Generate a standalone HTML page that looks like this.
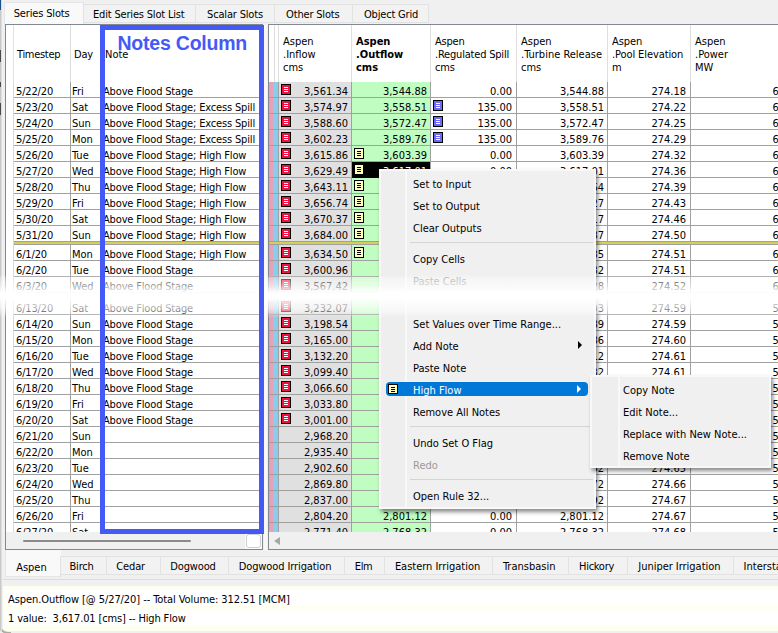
<!DOCTYPE html>
<html lang="en"><head><meta charset="utf-8"><title>Series Slots - Notes Column</title>
<style>
html,body{margin:0;padding:0}
body{width:778px;height:633px;overflow:hidden;background:#f0f0f0;position:relative;font-family:"DejaVu Sans Condensed","Liberation Sans",sans-serif;font-size:11px;color:#000;line-height:13px}
div,span{box-sizing:border-box}
.a{position:absolute}
.t{position:absolute;white-space:pre;height:13px;line-height:13px}
.r{text-align:right}
.hl{position:absolute;height:1px;background:#a0a0a0}
.vl{position:absolute;width:1px;background:#a0a0a0}
.ic{position:absolute;width:10px;height:11px;border:1px solid #000}
.ic.red{background:linear-gradient(#fff,#fff) 2px 2px/4px 1px no-repeat,linear-gradient(#fff,#fff) 2px 4px/4px 1px no-repeat,linear-gradient(#fff,#fff) 2px 6px/4px 1px no-repeat,#ee1440}
.ic.note{background:linear-gradient(#000,#000) 2px 2px/4px 1px no-repeat,linear-gradient(#000,#000) 2px 4px/4px 1px no-repeat,linear-gradient(#000,#000) 2px 6px/4px 1px no-repeat,#ffffc0}
.ic.blu{background:linear-gradient(#fff,#fff) 2px 2px/4px 1px no-repeat,linear-gradient(#fff,#fff) 2px 4px/4px 1px no-repeat,linear-gradient(#fff,#fff) 2px 6px/4px 1px no-repeat,#6b6bf3}
.tab{position:absolute;border:1px solid #e2e2e2;background:#f2f2f2;text-align:center;white-space:pre}
.tab.sel{background:#f9f9f9;border-color:#e6e6e6}
.menu{position:absolute;background:#f0f0f0;border:2px solid #f8f8f8;box-shadow:2px 3px 4px rgba(0,0,0,.45)}
.menu .gut{position:absolute;left:0;top:0;bottom:0;width:26px;background:#eeeeee;border-right:2px solid #f8f8f8}
.mi{position:absolute;white-space:pre;height:13px;line-height:13px}
.mi.dis{color:#9a9a9a}
.sep{position:absolute;height:1px;background:#d4d4d4}
.nt{letter-spacing:-0.16px}
</style></head><body>

<div class="tab sel" style="left:4px;top:2px;width:80px;height:23px;line-height:21px;border-bottom:none;letter-spacing:-0.15px;text-align:left;padding-left:8.7px">Series Slots</div>
<div class="tab" style="left:83px;top:4px;width:113px;height:19px;line-height:19px;letter-spacing:-0.18px;text-align:left;padding-left:9.0px">Edit Series Slot List</div>
<div class="tab" style="left:195px;top:4px;width:80px;height:19px;line-height:19px;letter-spacing:-0.18px;text-align:left;padding-left:11.1px">Scalar Slots</div>
<div class="tab" style="left:274px;top:4px;width:79px;height:19px;line-height:19px;letter-spacing:-0.18px;text-align:left;padding-left:11.1px">Other Slots</div>
<div class="tab" style="left:352px;top:4px;width:77px;height:19px;line-height:19px;letter-spacing:-0.18px;text-align:left;padding-left:11.0px">Object Grid</div>
<div class="a" style="left:5px;top:24px;width:258px;height:526px;background:#fff;border:1px solid #828790"></div>
<div class="vl" style="left:13px;top:25px;height:57px;background:#e2e2e2"></div>
<div class="vl" style="left:70px;top:25px;height:57px;background:#dcdcdc"></div>
<div class="t" style="left:17px;top:48px;letter-spacing:-0.3px">Timestep</div>
<div class="t" style="left:74px;top:48px;letter-spacing:-0.2px">Day</div>
<div class="t" style="left:105px;top:48px">Note</div>
<div class="a" style="left:6px;top:82px;width:256px;height:450px;overflow:hidden">
<div class="vl" style="left:7px;top:0;height:450px;background:#d8d8d8"></div>
<div class="vl" style="left:64px;top:0;height:450px"></div>
<div class="hl" style="left:8px;top:15px;width:250px"></div>
<div class="t" style="left:10px;top:3px;letter-spacing:-0.15px">5/22/20</div>
<div class="t" style="left:66px;top:3px">Fri</div>
<div class="t nt" style="left:97px;top:3px">Above Flood Stage</div>
<div class="hl" style="left:8px;top:31px;width:250px"></div>
<div class="t" style="left:10px;top:19px;letter-spacing:-0.15px">5/23/20</div>
<div class="t" style="left:66px;top:19px">Sat</div>
<div class="t nt" style="left:97px;top:19px">Above Flood Stage; Excess Spill</div>
<div class="hl" style="left:8px;top:47px;width:250px"></div>
<div class="t" style="left:10px;top:35px;letter-spacing:-0.15px">5/24/20</div>
<div class="t" style="left:66px;top:35px">Sun</div>
<div class="t nt" style="left:97px;top:35px">Above Flood Stage; Excess Spill</div>
<div class="hl" style="left:8px;top:63px;width:250px"></div>
<div class="t" style="left:10px;top:51px;letter-spacing:-0.15px">5/25/20</div>
<div class="t" style="left:66px;top:51px">Mon</div>
<div class="t nt" style="left:97px;top:51px">Above Flood Stage; Excess Spill</div>
<div class="hl" style="left:8px;top:79px;width:250px"></div>
<div class="t" style="left:10px;top:67px;letter-spacing:-0.15px">5/26/20</div>
<div class="t" style="left:66px;top:67px">Tue</div>
<div class="t nt" style="left:97px;top:67px">Above Flood Stage; High Flow</div>
<div class="hl" style="left:8px;top:95px;width:250px"></div>
<div class="t" style="left:10px;top:83px;letter-spacing:-0.15px">5/27/20</div>
<div class="t" style="left:66px;top:83px">Wed</div>
<div class="t nt" style="left:97px;top:83px">Above Flood Stage; High Flow</div>
<div class="hl" style="left:8px;top:111px;width:250px"></div>
<div class="t" style="left:10px;top:99px;letter-spacing:-0.15px">5/28/20</div>
<div class="t" style="left:66px;top:99px">Thu</div>
<div class="t nt" style="left:97px;top:99px">Above Flood Stage; High Flow</div>
<div class="hl" style="left:8px;top:127px;width:250px"></div>
<div class="t" style="left:10px;top:115px;letter-spacing:-0.15px">5/29/20</div>
<div class="t" style="left:66px;top:115px">Fri</div>
<div class="t nt" style="left:97px;top:115px">Above Flood Stage; High Flow</div>
<div class="hl" style="left:8px;top:143px;width:250px"></div>
<div class="t" style="left:10px;top:131px;letter-spacing:-0.15px">5/30/20</div>
<div class="t" style="left:66px;top:131px">Sat</div>
<div class="t nt" style="left:97px;top:131px">Above Flood Stage; High Flow</div>
<div class="hl" style="left:8px;top:159px;width:250px"></div>
<div class="t" style="left:10px;top:147px;letter-spacing:-0.15px">5/31/20</div>
<div class="t" style="left:66px;top:147px">Sun</div>
<div class="t nt" style="left:97px;top:147px">Above Flood Stage; High Flow</div>
<div class="hl" style="left:8px;top:178px;width:250px"></div>
<div class="t" style="left:10px;top:166px;letter-spacing:-0.15px">6/1/20</div>
<div class="t" style="left:66px;top:166px">Mon</div>
<div class="t nt" style="left:97px;top:166px">Above Flood Stage; High Flow</div>
<div class="hl" style="left:8px;top:194px;width:250px"></div>
<div class="t" style="left:10px;top:182px;letter-spacing:-0.15px">6/2/20</div>
<div class="t" style="left:66px;top:182px">Tue</div>
<div class="t nt" style="left:97px;top:182px">Above Flood Stage</div>
<div class="hl" style="left:8px;top:210px;width:250px"></div>
<div class="t" style="left:10px;top:198px;letter-spacing:-0.15px">6/3/20</div>
<div class="t" style="left:66px;top:198px">Wed</div>
<div class="t nt" style="left:97px;top:198px">Above Flood Stage</div>
<div class="hl" style="left:8px;top:232px;width:250px"></div>
<div class="t" style="left:10px;top:220px;letter-spacing:-0.15px">6/13/20</div>
<div class="t" style="left:66px;top:220px">Sat</div>
<div class="t nt" style="left:97px;top:220px">Above Flood Stage</div>
<div class="hl" style="left:8px;top:248px;width:250px"></div>
<div class="t" style="left:10px;top:236px;letter-spacing:-0.15px">6/14/20</div>
<div class="t" style="left:66px;top:236px">Sun</div>
<div class="t nt" style="left:97px;top:236px">Above Flood Stage</div>
<div class="hl" style="left:8px;top:264px;width:250px"></div>
<div class="t" style="left:10px;top:252px;letter-spacing:-0.15px">6/15/20</div>
<div class="t" style="left:66px;top:252px">Mon</div>
<div class="t nt" style="left:97px;top:252px">Above Flood Stage</div>
<div class="hl" style="left:8px;top:280px;width:250px"></div>
<div class="t" style="left:10px;top:268px;letter-spacing:-0.15px">6/16/20</div>
<div class="t" style="left:66px;top:268px">Tue</div>
<div class="t nt" style="left:97px;top:268px">Above Flood Stage</div>
<div class="hl" style="left:8px;top:296px;width:250px"></div>
<div class="t" style="left:10px;top:284px;letter-spacing:-0.15px">6/17/20</div>
<div class="t" style="left:66px;top:284px">Wed</div>
<div class="t nt" style="left:97px;top:284px">Above Flood Stage</div>
<div class="hl" style="left:8px;top:312px;width:250px"></div>
<div class="t" style="left:10px;top:300px;letter-spacing:-0.15px">6/18/20</div>
<div class="t" style="left:66px;top:300px">Thu</div>
<div class="t nt" style="left:97px;top:300px">Above Flood Stage</div>
<div class="hl" style="left:8px;top:328px;width:250px"></div>
<div class="t" style="left:10px;top:316px;letter-spacing:-0.15px">6/19/20</div>
<div class="t" style="left:66px;top:316px">Fri</div>
<div class="t nt" style="left:97px;top:316px">Above Flood Stage</div>
<div class="hl" style="left:8px;top:344px;width:250px"></div>
<div class="t" style="left:10px;top:332px;letter-spacing:-0.15px">6/20/20</div>
<div class="t" style="left:66px;top:332px">Sat</div>
<div class="t nt" style="left:97px;top:332px">Above Flood Stage</div>
<div class="hl" style="left:8px;top:360px;width:250px"></div>
<div class="t" style="left:10px;top:348px;letter-spacing:-0.15px">6/21/20</div>
<div class="t" style="left:66px;top:348px">Sun</div>
<div class="hl" style="left:8px;top:376px;width:250px"></div>
<div class="t" style="left:10px;top:364px;letter-spacing:-0.15px">6/22/20</div>
<div class="t" style="left:66px;top:364px">Mon</div>
<div class="hl" style="left:8px;top:392px;width:250px"></div>
<div class="t" style="left:10px;top:380px;letter-spacing:-0.15px">6/23/20</div>
<div class="t" style="left:66px;top:380px">Tue</div>
<div class="hl" style="left:8px;top:408px;width:250px"></div>
<div class="t" style="left:10px;top:396px;letter-spacing:-0.15px">6/24/20</div>
<div class="t" style="left:66px;top:396px">Wed</div>
<div class="hl" style="left:8px;top:424px;width:250px"></div>
<div class="t" style="left:10px;top:412px;letter-spacing:-0.15px">6/25/20</div>
<div class="t" style="left:66px;top:412px">Thu</div>
<div class="hl" style="left:8px;top:440px;width:250px"></div>
<div class="t" style="left:10px;top:428px;letter-spacing:-0.15px">6/26/20</div>
<div class="t" style="left:66px;top:428px">Fri</div>
<div class="hl" style="left:8px;top:456px;width:250px"></div>
<div class="t" style="left:10px;top:444px;letter-spacing:-0.15px">6/27/20</div>
<div class="t" style="left:66px;top:444px">Sat</div>
<div class="hl" style="left:8px;top:160px;width:250px;height:2px;background:#d3cf57"></div>
<div class="hl" style="left:8px;top:162px;width:250px"></div>
</div>
<div class="a" style="left:6px;top:532px;width:256px;height:17px;background:#f0f0f0"></div>
<div class="a" style="left:23px;top:540px;width:168px;height:2px;background:#8b8b8b;border-radius:1px"></div>
<div class="a" style="left:245px;top:534px;width:17px;height:15px;background:#fbfbfb"></div>
<div class="a" style="left:246px;top:534px;width:15px;height:14px;background:#fff;border:1px solid #d0d0d0;border-radius:3px"></div>
<div class="a" style="left:264px;top:25px;width:3px;height:525px;background:#f8f8f6"></div>
<div class="a" style="left:268px;top:24px;width:520px;height:526px;background:#fff;border:1px solid #828790"></div>
<div class="vl" style="left:274px;top:25px;height:57px;background:#dedede"></div>
<div class="vl" style="left:278px;top:25px;height:57px;background:#dedede"></div>
<div class="vl" style="left:351px;top:25px;height:57px;background:#dedede"></div>
<div class="vl" style="left:430px;top:25px;height:57px;background:#dedede"></div>
<div class="vl" style="left:516px;top:25px;height:57px;background:#dedede"></div>
<div class="vl" style="left:607px;top:25px;height:57px;background:#dedede"></div>
<div class="vl" style="left:690px;top:25px;height:57px;background:#dedede"></div>
<div class="t" style="left:283px;top:35px;height:39px;">Aspen
.Inflow
cms</div>
<div class="t" style="left:356px;top:35px;height:39px;font-weight:bold;">Aspen
.Outflow
cms</div>
<div class="t" style="left:435px;top:35px;height:39px;letter-spacing:-0.2px;">Aspen
.Regulated Spill
cms</div>
<div class="t" style="left:521px;top:35px;height:39px;">Aspen
.Turbine Release
cms</div>
<div class="t" style="left:612px;top:35px;height:39px;letter-spacing:-0.1px;">Aspen
.Pool Elevation
m</div>
<div class="t" style="left:695px;top:35px;height:39px;">Aspen
.Power
MW</div>
<div class="a" style="left:269px;top:82px;width:509px;height:450px;overflow:hidden">
<div class="a" style="left:0;top:0;width:5px;height:450px;background:#e8a0b6"></div>
<div class="a" style="left:5px;top:0;width:4px;height:450px;background:#87cdee"></div>
<div class="a" style="left:10px;top:0;width:72px;height:450px;background:#e0e0e0"></div>
<div class="a" style="left:83px;top:0;width:78px;height:450px;background:#c0fdc0"></div>
<div class="vl" style="left:4px;top:0;height:450px;background:#c9b6c4"></div>
<div class="vl" style="left:9px;top:0;height:450px"></div>
<div class="vl" style="left:82px;top:0;height:450px"></div>
<div class="vl" style="left:161px;top:0;height:450px"></div>
<div class="vl" style="left:247px;top:0;height:450px"></div>
<div class="vl" style="left:338px;top:0;height:450px"></div>
<div class="vl" style="left:421px;top:0;height:450px"></div>
<div class="hl" style="left:0;top:15px;width:509px"></div>
<div class="ic red" style="left:12px;top:2px"></div>
<div class="t r" style="left:21px;width:58px;top:3px">3,561.34</div>
<div class="t r" style="left:97px;width:61px;top:3px;">3,544.88</div>
<div class="t r" style="left:181px;width:62px;top:3px">0.00</div>
<div class="t r" style="left:261px;width:74px;top:3px">3,544.88</div>
<div class="t r" style="left:351px;width:66px;top:3px">274.18</div>
<div class="t" style="left:503.5px;top:3px">600.00</div>
<div class="hl" style="left:0;top:31px;width:509px"></div>
<div class="ic red" style="left:12px;top:18px"></div>
<div class="t r" style="left:21px;width:58px;top:19px">3,574.97</div>
<div class="t r" style="left:97px;width:61px;top:19px;">3,558.51</div>
<div class="ic blu" style="left:164px;top:18px"></div>
<div class="t r" style="left:181px;width:62px;top:19px">135.00</div>
<div class="t r" style="left:261px;width:74px;top:19px">3,558.51</div>
<div class="t r" style="left:351px;width:66px;top:19px">274.22</div>
<div class="t" style="left:503.5px;top:19px">600.00</div>
<div class="hl" style="left:0;top:47px;width:509px"></div>
<div class="ic red" style="left:12px;top:34px"></div>
<div class="t r" style="left:21px;width:58px;top:35px">3,588.60</div>
<div class="t r" style="left:97px;width:61px;top:35px;">3,572.47</div>
<div class="ic blu" style="left:164px;top:34px"></div>
<div class="t r" style="left:181px;width:62px;top:35px">135.00</div>
<div class="t r" style="left:261px;width:74px;top:35px">3,572.47</div>
<div class="t r" style="left:351px;width:66px;top:35px">274.25</div>
<div class="t" style="left:503.5px;top:35px">600.00</div>
<div class="hl" style="left:0;top:63px;width:509px"></div>
<div class="ic red" style="left:12px;top:50px"></div>
<div class="t r" style="left:21px;width:58px;top:51px">3,602.23</div>
<div class="t r" style="left:97px;width:61px;top:51px;">3,589.76</div>
<div class="ic blu" style="left:164px;top:50px"></div>
<div class="t r" style="left:181px;width:62px;top:51px">135.00</div>
<div class="t r" style="left:261px;width:74px;top:51px">3,589.76</div>
<div class="t r" style="left:351px;width:66px;top:51px">274.29</div>
<div class="t" style="left:503.5px;top:51px">600.00</div>
<div class="hl" style="left:0;top:79px;width:509px"></div>
<div class="ic red" style="left:12px;top:66px"></div>
<div class="t r" style="left:21px;width:58px;top:67px">3,615.86</div>
<div class="ic note" style="left:85px;top:66px"></div>
<div class="t r" style="left:97px;width:61px;top:67px;">3,603.39</div>
<div class="t r" style="left:181px;width:62px;top:67px">0.00</div>
<div class="t r" style="left:261px;width:74px;top:67px">3,603.39</div>
<div class="t r" style="left:351px;width:66px;top:67px">274.32</div>
<div class="t" style="left:503.5px;top:67px">600.00</div>
<div class="hl" style="left:0;top:95px;width:509px"></div>
<div class="a" style="left:83px;top:80px;width:78px;height:16px;background:#000"></div>
<div class="ic red" style="left:12px;top:82px"></div>
<div class="t r" style="left:21px;width:58px;top:83px">3,629.49</div>
<div class="ic note" style="left:85px;top:82px"></div>
<div class="t r" style="left:97px;width:61px;top:83px;color:#fff;">3,617.01</div>
<div class="t r" style="left:181px;width:62px;top:83px">0.00</div>
<div class="t r" style="left:261px;width:74px;top:83px">3,617.01</div>
<div class="t r" style="left:351px;width:66px;top:83px">274.36</div>
<div class="t" style="left:503.5px;top:83px">600.00</div>
<div class="hl" style="left:0;top:111px;width:509px"></div>
<div class="ic red" style="left:12px;top:98px"></div>
<div class="t r" style="left:21px;width:58px;top:99px">3,643.11</div>
<div class="ic note" style="left:85px;top:98px"></div>
<div class="t r" style="left:97px;width:61px;top:99px;">3,630.64</div>
<div class="t r" style="left:181px;width:62px;top:99px">0.00</div>
<div class="t r" style="left:261px;width:74px;top:99px">3,630.64</div>
<div class="t r" style="left:351px;width:66px;top:99px">274.39</div>
<div class="t" style="left:503.5px;top:99px">600.00</div>
<div class="hl" style="left:0;top:127px;width:509px"></div>
<div class="ic red" style="left:12px;top:114px"></div>
<div class="t r" style="left:21px;width:58px;top:115px">3,656.74</div>
<div class="ic note" style="left:85px;top:114px"></div>
<div class="t r" style="left:97px;width:61px;top:115px;">3,644.27</div>
<div class="t r" style="left:181px;width:62px;top:115px">0.00</div>
<div class="t r" style="left:261px;width:74px;top:115px">3,644.27</div>
<div class="t r" style="left:351px;width:66px;top:115px">274.43</div>
<div class="t" style="left:503.5px;top:115px">600.00</div>
<div class="hl" style="left:0;top:143px;width:509px"></div>
<div class="ic red" style="left:12px;top:130px"></div>
<div class="t r" style="left:21px;width:58px;top:131px">3,670.37</div>
<div class="ic note" style="left:85px;top:130px"></div>
<div class="t r" style="left:97px;width:61px;top:131px;">3,658.17</div>
<div class="t r" style="left:181px;width:62px;top:131px">0.00</div>
<div class="t r" style="left:261px;width:74px;top:131px">3,658.17</div>
<div class="t r" style="left:351px;width:66px;top:131px">274.46</div>
<div class="t" style="left:503.5px;top:131px">600.00</div>
<div class="hl" style="left:0;top:159px;width:509px"></div>
<div class="ic red" style="left:12px;top:146px"></div>
<div class="t r" style="left:21px;width:58px;top:147px">3,684.00</div>
<div class="ic note" style="left:85px;top:146px"></div>
<div class="t r" style="left:97px;width:61px;top:147px;">3,671.87</div>
<div class="t r" style="left:181px;width:62px;top:147px">0.00</div>
<div class="t r" style="left:261px;width:74px;top:147px">3,671.87</div>
<div class="t r" style="left:351px;width:66px;top:147px">274.50</div>
<div class="t" style="left:503.5px;top:147px">600.00</div>
<div class="hl" style="left:0;top:178px;width:509px"></div>
<div class="ic red" style="left:12px;top:165px"></div>
<div class="t r" style="left:21px;width:58px;top:166px">3,634.50</div>
<div class="ic note" style="left:85px;top:165px"></div>
<div class="t r" style="left:97px;width:61px;top:166px;">3,650.35</div>
<div class="t r" style="left:181px;width:62px;top:166px">0.00</div>
<div class="t r" style="left:261px;width:74px;top:166px">3,650.35</div>
<div class="t r" style="left:351px;width:66px;top:166px">274.51</div>
<div class="t" style="left:503.5px;top:166px">600.00</div>
<div class="hl" style="left:0;top:194px;width:509px"></div>
<div class="ic red" style="left:12px;top:181px"></div>
<div class="t r" style="left:21px;width:58px;top:182px">3,600.96</div>
<div class="t r" style="left:97px;width:61px;top:182px;">3,617.32</div>
<div class="t r" style="left:181px;width:62px;top:182px">0.00</div>
<div class="t r" style="left:261px;width:74px;top:182px">3,617.32</div>
<div class="t r" style="left:351px;width:66px;top:182px">274.51</div>
<div class="t" style="left:503.5px;top:182px">600.00</div>
<div class="hl" style="left:0;top:210px;width:509px"></div>
<div class="ic red" style="left:12px;top:197px"></div>
<div class="t r" style="left:21px;width:58px;top:198px">3,567.42</div>
<div class="t r" style="left:97px;width:61px;top:198px;">3,584.28</div>
<div class="t r" style="left:181px;width:62px;top:198px">0.00</div>
<div class="t r" style="left:261px;width:74px;top:198px">3,584.28</div>
<div class="t r" style="left:351px;width:66px;top:198px">274.52</div>
<div class="t" style="left:503.5px;top:198px">600.00</div>
<div class="hl" style="left:0;top:232px;width:509px"></div>
<div class="ic red" style="left:12px;top:219px"></div>
<div class="t r" style="left:21px;width:58px;top:220px">3,232.07</div>
<div class="t r" style="left:97px;width:61px;top:220px;">3,248.93</div>
<div class="t r" style="left:181px;width:62px;top:220px">0.00</div>
<div class="t r" style="left:261px;width:74px;top:220px">3,248.93</div>
<div class="t r" style="left:351px;width:66px;top:220px">274.59</div>
<div class="t" style="left:503.5px;top:220px">500.00</div>
<div class="hl" style="left:0;top:248px;width:509px"></div>
<div class="ic red" style="left:12px;top:235px"></div>
<div class="t r" style="left:21px;width:58px;top:236px">3,198.54</div>
<div class="t r" style="left:97px;width:61px;top:236px;">3,215.89</div>
<div class="t r" style="left:181px;width:62px;top:236px">0.00</div>
<div class="t r" style="left:261px;width:74px;top:236px">3,215.89</div>
<div class="t r" style="left:351px;width:66px;top:236px">274.59</div>
<div class="t" style="left:503.5px;top:236px">500.00</div>
<div class="hl" style="left:0;top:264px;width:509px"></div>
<div class="ic red" style="left:12px;top:251px"></div>
<div class="t r" style="left:21px;width:58px;top:252px">3,165.00</div>
<div class="t r" style="left:97px;width:61px;top:252px;">3,182.86</div>
<div class="t r" style="left:181px;width:62px;top:252px">0.00</div>
<div class="t r" style="left:261px;width:74px;top:252px">3,182.86</div>
<div class="t r" style="left:351px;width:66px;top:252px">274.60</div>
<div class="t" style="left:503.5px;top:252px">500.00</div>
<div class="hl" style="left:0;top:280px;width:509px"></div>
<div class="ic red" style="left:12px;top:267px"></div>
<div class="t r" style="left:21px;width:58px;top:268px">3,132.20</div>
<div class="t r" style="left:97px;width:61px;top:268px;">3,149.12</div>
<div class="t r" style="left:181px;width:62px;top:268px">0.00</div>
<div class="t r" style="left:261px;width:74px;top:268px">3,149.12</div>
<div class="t r" style="left:351px;width:66px;top:268px">274.61</div>
<div class="t" style="left:503.5px;top:268px">500.00</div>
<div class="hl" style="left:0;top:296px;width:509px"></div>
<div class="ic red" style="left:12px;top:283px"></div>
<div class="t r" style="left:21px;width:58px;top:284px">3,099.40</div>
<div class="t r" style="left:97px;width:61px;top:284px;">3,116.32</div>
<div class="t r" style="left:181px;width:62px;top:284px">0.00</div>
<div class="t r" style="left:261px;width:74px;top:284px">3,116.32</div>
<div class="t r" style="left:351px;width:66px;top:284px">274.61</div>
<div class="t" style="left:503.5px;top:284px">500.00</div>
<div class="hl" style="left:0;top:312px;width:509px"></div>
<div class="ic red" style="left:12px;top:299px"></div>
<div class="t r" style="left:21px;width:58px;top:300px">3,066.60</div>
<div class="t r" style="left:97px;width:61px;top:300px;">3,083.52</div>
<div class="t r" style="left:181px;width:62px;top:300px">0.00</div>
<div class="t r" style="left:261px;width:74px;top:300px">3,083.52</div>
<div class="t r" style="left:351px;width:66px;top:300px">274.62</div>
<div class="t" style="left:503.5px;top:300px">500.00</div>
<div class="hl" style="left:0;top:328px;width:509px"></div>
<div class="ic red" style="left:12px;top:315px"></div>
<div class="t r" style="left:21px;width:58px;top:316px">3,033.80</div>
<div class="t r" style="left:97px;width:61px;top:316px;">3,050.72</div>
<div class="t r" style="left:181px;width:62px;top:316px">0.00</div>
<div class="t r" style="left:261px;width:74px;top:316px">3,050.72</div>
<div class="t r" style="left:351px;width:66px;top:316px">274.62</div>
<div class="t" style="left:503.5px;top:316px">500.00</div>
<div class="hl" style="left:0;top:344px;width:509px"></div>
<div class="ic red" style="left:12px;top:331px"></div>
<div class="t r" style="left:21px;width:58px;top:332px">3,001.00</div>
<div class="t r" style="left:97px;width:61px;top:332px;">3,017.92</div>
<div class="t r" style="left:181px;width:62px;top:332px">0.00</div>
<div class="t r" style="left:261px;width:74px;top:332px">3,017.92</div>
<div class="t r" style="left:351px;width:66px;top:332px">274.63</div>
<div class="t" style="left:503.5px;top:332px">500.00</div>
<div class="hl" style="left:0;top:360px;width:509px"></div>
<div class="t r" style="left:21px;width:58px;top:348px">2,968.20</div>
<div class="t r" style="left:97px;width:61px;top:348px;">2,985.12</div>
<div class="t r" style="left:181px;width:62px;top:348px">0.00</div>
<div class="t r" style="left:261px;width:74px;top:348px">2,985.12</div>
<div class="t r" style="left:351px;width:66px;top:348px">274.63</div>
<div class="t" style="left:503.5px;top:348px">500.00</div>
<div class="hl" style="left:0;top:376px;width:509px"></div>
<div class="t r" style="left:21px;width:58px;top:364px">2,935.40</div>
<div class="t r" style="left:97px;width:61px;top:364px;">2,952.32</div>
<div class="t r" style="left:181px;width:62px;top:364px">0.00</div>
<div class="t r" style="left:261px;width:74px;top:364px">2,952.32</div>
<div class="t r" style="left:351px;width:66px;top:364px">274.64</div>
<div class="t" style="left:503.5px;top:364px">500.00</div>
<div class="hl" style="left:0;top:392px;width:509px"></div>
<div class="t r" style="left:21px;width:58px;top:380px">2,902.60</div>
<div class="t r" style="left:97px;width:61px;top:380px;">2,919.52</div>
<div class="t r" style="left:181px;width:62px;top:380px">0.00</div>
<div class="t r" style="left:261px;width:74px;top:380px">2,919.52</div>
<div class="t r" style="left:351px;width:66px;top:380px">274.65</div>
<div class="t" style="left:503.5px;top:380px">500.00</div>
<div class="hl" style="left:0;top:408px;width:509px"></div>
<div class="t r" style="left:21px;width:58px;top:396px">2,869.80</div>
<div class="t r" style="left:97px;width:61px;top:396px;">2,886.72</div>
<div class="t r" style="left:181px;width:62px;top:396px">0.00</div>
<div class="t r" style="left:261px;width:74px;top:396px">2,886.72</div>
<div class="t r" style="left:351px;width:66px;top:396px">274.66</div>
<div class="t" style="left:503.5px;top:396px">500.00</div>
<div class="hl" style="left:0;top:424px;width:509px"></div>
<div class="t r" style="left:21px;width:58px;top:412px">2,837.00</div>
<div class="t r" style="left:97px;width:61px;top:412px;">2,853.92</div>
<div class="t r" style="left:181px;width:62px;top:412px">0.00</div>
<div class="t r" style="left:261px;width:74px;top:412px">2,853.92</div>
<div class="t r" style="left:351px;width:66px;top:412px">274.67</div>
<div class="t" style="left:503.5px;top:412px">500.00</div>
<div class="hl" style="left:0;top:440px;width:509px"></div>
<div class="t r" style="left:21px;width:58px;top:428px">2,804.20</div>
<div class="t r" style="left:97px;width:61px;top:428px;">2,801.12</div>
<div class="t r" style="left:181px;width:62px;top:428px">0.00</div>
<div class="t r" style="left:261px;width:74px;top:428px">2,801.12</div>
<div class="t r" style="left:351px;width:66px;top:428px">274.67</div>
<div class="t" style="left:503.5px;top:428px">500.00</div>
<div class="hl" style="left:0;top:456px;width:509px"></div>
<div class="t r" style="left:21px;width:58px;top:444px">2,771.40</div>
<div class="t r" style="left:97px;width:61px;top:444px;">2,768.32</div>
<div class="t r" style="left:181px;width:62px;top:444px">0.00</div>
<div class="t r" style="left:261px;width:74px;top:444px">2,768.32</div>
<div class="t r" style="left:351px;width:66px;top:444px">274.68</div>
<div class="t" style="left:503.5px;top:444px">500.00</div>
<div class="hl" style="left:0;top:160px;width:509px;height:2px;background:#d3cf57"></div>
<div class="hl" style="left:0;top:162px;width:509px"></div>
</div>
<div class="a" style="left:269px;top:532px;width:509px;height:17px;background:#f0f0f0"></div>
<div class="a" style="left:274px;top:537px;width:0;height:0;border-top:4px solid transparent;border-bottom:4px solid transparent;border-right:6px solid #a6a6a6"></div>
<div class="a" style="left:3px;top:579px;width:780px;height:1px;background:#dcdcdc"></div>
<div class="tab sel" style="left:5px;top:550px;width:56px;height:27px;line-height:36px;border-top:none;border-right-color:#f9f9f9;text-align:left;padding-left:10.3px;letter-spacing:-0.05px">Aspen</div>
<div class="a" style="left:60px;top:556px;width:1px;height:21px;background:#dcdcdc"></div>
<div class="tab" style="left:60px;top:556px;width:47px;height:19px;line-height:19px;text-align:left;padding-left:8.5px;letter-spacing:-0.2px">Birch</div>
<div class="tab" style="left:106px;top:556px;width:55px;height:19px;line-height:19px;text-align:left;padding-left:9.3px;letter-spacing:-0.15px">Cedar</div>
<div class="tab" style="left:160px;top:556px;width:69px;height:19px;line-height:19px;text-align:left;padding-left:9.3px;letter-spacing:-0.15px">Dogwood</div>
<div class="tab" style="left:228px;top:556px;width:117px;height:19px;line-height:19px;text-align:left;padding-left:9.7px;letter-spacing:-0.1px">Dogwood Irrigation</div>
<div class="tab" style="left:344px;top:556px;width:41px;height:19px;line-height:19px;text-align:left;padding-left:9.8px;letter-spacing:-0.4px">Elm</div>
<div class="tab" style="left:384px;top:556px;width:109px;height:19px;line-height:19px;text-align:left;padding-left:9.9px;letter-spacing:-0.02px">Eastern Irrigation</div>
<div class="tab" style="left:492px;top:556px;width:77px;height:19px;line-height:19px;text-align:left;padding-left:9.9px;letter-spacing:0px">Transbasin</div>
<div class="tab" style="left:568px;top:556px;width:60px;height:19px;line-height:19px;text-align:left;padding-left:10.0px;letter-spacing:-0.28px">Hickory</div>
<div class="tab" style="left:627px;top:556px;width:107px;height:19px;line-height:19px;text-align:left;padding-left:10.3px;letter-spacing:-0.03px">Juniper Irrigation</div>
<div class="tab" style="left:733px;top:556px;width:68px;height:19px;line-height:19px;text-align:left;padding-left:9.6px;letter-spacing:0px">Interstate</div>
<div class="a" style="left:3px;top:586px;width:780px;height:45px;background:#fffff0"></div>
<div class="a" style="left:6px;top:590px;width:780px;height:16px;background:#fff"></div>
<div class="a" style="left:6px;top:609px;width:780px;height:16px;background:#fff"></div>
<div class="t" style="left:8px;top:593px;letter-spacing:-0.08px">Aspen.Outflow [@ 5/27/20] -- Total Volume: 312.51 [MCM]</div>
<div class="t" style="left:8px;top:612px;letter-spacing:-0.15px">1 value:  3,617.01 [cms] -- High Flow</div>
<div class="a" style="left:-1px;top:618px;width:12px;height:16px;border-left:2px solid #ababab;border-bottom:2px solid #ababab;border-bottom-left-radius:9px"></div>
<div class="a" style="left:0;top:0;width:1px;height:631px;background:#c8c8c8"></div>
<div class="a" style="left:1px;top:0;width:1px;height:631px;background:#dedede"></div>
<div class="a" style="left:0;top:0;width:1px;height:10px;background:#1c4f8f"></div>
<div class="a" style="left:0;top:50px;width:1px;height:12px;background:#4a4a4a"></div>
<div class="a" style="left:0;top:82px;width:1px;height:5px;background:#4a4a4a"></div>
<div class="a" style="left:0;top:103px;width:1px;height:12px;background:#4a4a4a"></div>
<div class="menu" style="left:379px;top:169px;width:217px;height:340px">
<div class="gut"></div>
<div class="sep" style="left:29px;top:71px;width:183px"></div>
<div class="sep" style="left:29px;top:255px;width:183px"></div>
<div class="sep" style="left:29px;top:308px;width:183px"></div>
<div class="mi" style="left:32px;top:7px">Set to Input</div>
<div class="mi" style="left:32px;top:29px">Set to Output</div>
<div class="mi" style="left:32px;top:51px">Clear Outputs</div>
<div class="mi" style="left:32px;top:82px">Copy Cells</div>
<div class="mi dis" style="left:32px;top:104px">Paste Cells</div>
<div class="mi" style="left:32px;top:147px">Set Values over Time Range...</div>
<div class="mi" style="left:32px;top:169px">Add Note</div>
<div class="a" style="left:197px;top:170px;width:0;height:0;border-top:4px solid transparent;border-bottom:4px solid transparent;border-left:4px solid #000"></div>
<div class="mi" style="left:32px;top:191px">Paste Note</div>
<div class="a" style="left:5px;top:211px;width:202px;height:14px;background:#0078d7;border-radius:4px"></div>
<div class="ic note" style="left:7px;top:213px;height:10px"></div>
<div class="mi" style="left:32px;top:213px;color:#fff">High Flow</div>
<div class="a" style="left:196px;top:214px;width:0;height:0;border-top:4px solid transparent;border-bottom:4px solid transparent;border-left:4px solid #fff"></div>
<div class="mi" style="left:32px;top:235px">Remove All Notes</div>
<div class="mi" style="left:32px;top:266px">Undo Set O Flag</div>
<div class="mi dis" style="left:32px;top:288px">Redo</div>
<div class="mi" style="left:32px;top:319px">Open Rule 32...</div>
</div>
<div class="menu" style="left:590px;top:375px;width:181px;height:93px">
<div class="gut" style="width:28px"></div>
<div class="mi" style="left:31px;top:7px">Copy Note</div>
<div class="mi" style="left:31px;top:29px">Edit Note...</div>
<div class="mi" style="left:31px;top:51px">Replace with New Note...</div>
<div class="mi" style="left:31px;top:73px">Remove Note</div>
</div>
<div class="a" style="left:0;top:275px;width:778px;height:43px;background:linear-gradient(to bottom,rgba(255,255,255,0) 0px,rgba(255,255,255,0.35) 3px,rgba(255,255,255,0.62) 11px,rgba(255,255,255,0.95) 17px,rgba(255,255,255,1) 19px,rgba(255,255,255,1) 23px,rgba(255,255,255,0.8) 28px,rgba(255,255,255,0.66) 33px,rgba(255,255,255,0.45) 37px,rgba(255,255,255,0.2) 40px,rgba(255,255,255,0) 43px)"></div>
<div class="a" style="left:100px;top:25px;width:164px;height:509px;border:5px solid #4459f6"></div>
<div class="a" style="left:117.5px;top:31px;letter-spacing:-0.22px;font:bold 19.5px/24px 'Liberation Sans',Arial,sans-serif;color:#4459f6;white-space:pre">Notes Column</div>
</body></html>
